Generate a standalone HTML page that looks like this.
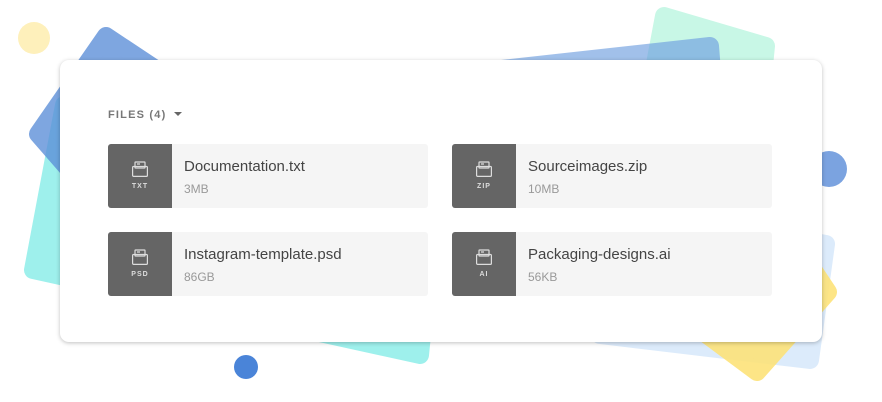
<!DOCTYPE html>
<html><head><style>
body{margin:0;width:882px;height:402px;background:#fff;position:relative;overflow:hidden;font-family:"Liberation Sans",sans-serif}
svg.bg{position:absolute;left:0;top:0}
.card{position:absolute;left:60px;top:60px;width:762px;height:282px;background:#fff;border-radius:9px;box-shadow:0 1px 4px rgba(0,0,0,.25)}
.hdr{position:absolute;left:48px;top:49px;font-size:11px;font-weight:bold;letter-spacing:1.2px;color:#777}
.hdr .tri{display:inline-block;margin-left:8px;width:0;height:0;border-left:4px solid transparent;border-right:4px solid transparent;border-top:4px solid #666;vertical-align:2px}
.item{position:absolute;width:320px;height:64px;background:#f5f5f5;border-radius:3px;overflow:hidden}
.ic{position:absolute;left:0;top:0;width:64px;height:64px;background:#656565}
.ic svg{position:absolute;left:24px;top:17px}
.ic span{position:absolute;left:0;width:64px;top:39px;text-align:center;color:#ddd;font-size:7px;font-weight:bold;letter-spacing:1px}
.nm{position:absolute;left:76px;top:14px;font-size:15px;color:#444}
.sz{position:absolute;left:76px;top:38px;font-size:12px;color:#999}
</style></head><body>
<svg class="bg" width="882" height="402">
<g stroke-linejoin="round" stroke-width="18">
<polygon points="64,105 440,150 420,355 33,270" fill="#9ef0ec" stroke="#9ef0ec"/>
<polygon points="106,36 300,165 200,320 38,134" fill="#5b8ed8" stroke="#5b8ed8" opacity=".78"/>
<polygon points="600,205 826,244 810,360 600,335" fill="#dcebfb" stroke="#dcebfb"/>
<polygon points="760,190 828,292 757,372 660,300" fill="#fde37a" stroke="#fde37a" opacity=".9"/>
<polygon points="664,16 766,46 740,300 620,250" fill="#c8f7e6" stroke="#c8f7e6"/>
<polygon points="330,88 710,46 730,300 340,320" fill="#6f9fe0" stroke="#6f9fe0" opacity=".65"/>
</g>
<circle cx="34" cy="38" r="16" fill="#fef0bb"/>
<circle cx="829" cy="169" r="18" fill="#7ba3e0"/>
<circle cx="246" cy="367" r="12" fill="#4a84d8"/>
</svg>
<div class="card">
<div class="hdr">FILES (4)<span class="tri"></span></div>
<div class="item" style="left:48px;top:84px"><div class="ic"><svg width="16" height="16" viewBox="0 0 16 16" fill="none" stroke="#ddd" stroke-width="1.2"><rect x="3" y="1" width="10" height="6" rx=".5"/><rect x=".6" y="5.5" width="14.8" height="9.9" rx="1"/><line x1="5" y1="3" x2="8" y2="3"/></svg><span>TXT</span></div><div class="nm">Documentation.txt</div><div class="sz">3MB</div></div>
<div class="item" style="left:392px;top:84px"><div class="ic"><svg width="16" height="16" viewBox="0 0 16 16" fill="none" stroke="#ddd" stroke-width="1.2"><rect x="3" y="1" width="10" height="6" rx=".5"/><rect x=".6" y="5.5" width="14.8" height="9.9" rx="1"/><line x1="5" y1="3" x2="8" y2="3"/></svg><span>ZIP</span></div><div class="nm">Sourceimages.zip</div><div class="sz">10MB</div></div>
<div class="item" style="left:48px;top:172px"><div class="ic"><svg width="16" height="16" viewBox="0 0 16 16" fill="none" stroke="#ddd" stroke-width="1.2"><rect x="3" y="1" width="10" height="6" rx=".5"/><rect x=".6" y="5.5" width="14.8" height="9.9" rx="1"/><line x1="5" y1="3" x2="8" y2="3"/></svg><span>PSD</span></div><div class="nm">Instagram-template.psd</div><div class="sz">86GB</div></div>
<div class="item" style="left:392px;top:172px"><div class="ic"><svg width="16" height="16" viewBox="0 0 16 16" fill="none" stroke="#ddd" stroke-width="1.2"><rect x="3" y="1" width="10" height="6" rx=".5"/><rect x=".6" y="5.5" width="14.8" height="9.9" rx="1"/><line x1="5" y1="3" x2="8" y2="3"/></svg><span>AI</span></div><div class="nm">Packaging-designs.ai</div><div class="sz">56KB</div></div>
</div>
</body></html>
